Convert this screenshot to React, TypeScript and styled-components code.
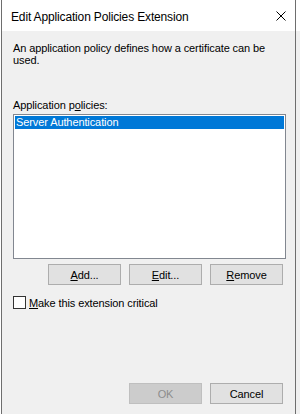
import React from "react";
import styled, { createGlobalStyle } from "styled-components";

const GlobalStyle = createGlobalStyle`
  html, body {
    margin: 0;
    padding: 0;
    background: #f0f0f0;
  }
  body {
    font-family: "Liberation Sans", Arial, sans-serif;
    font-size: 11px;
    color: #000;
  }
`;

const Page = styled.div`
  display: flex;
  width: 300px;
  height: 414px;
  overflow: hidden;
  background: linear-gradient(#ffffff 0 31px, #f0f0f0 31px);
`;

const Edge = styled.div`
  width: 1px;
  background: #ffffff;
`;

const Dialog = styled.div`
  box-sizing: border-box;
  width: 295px;
  height: 414px;
  border-left: 1px solid #6e6e6e;
  border-right: 1px solid #6e6e6e;
  display: flex;
  flex-direction: column;
  background: #f0f0f0;
`;

const TitleBar = styled.div`
  height: 31px;
  background: #ffffff;
  display: flex;
  align-items: center;
  justify-content: space-between;
  padding-left: 9px;
  padding-right: 9px;
`;

const Title = styled.span`
  font-size: 12px;
  letter-spacing: -0.15px;
  line-height: 14px;
  padding-top: 2px;
`;

const Close = styled.svg`
  width: 10px;
  height: 10px;
  margin-top: 0px;
`;

const Body = styled.div`
  flex: 1;
  display: flex;
  flex-direction: column;
  padding: 11px 9px 10px 11px;
  letter-spacing: -0.1px;
  line-height: 12px;
`;

const Description = styled.p`
  margin: 0;
  width: 270px;
`;

const Label = styled.div`
  margin-top: 33px;
`;

const ListBox = styled.div`
  box-sizing: border-box;
  margin-top: 3px;
  width: 273px;
  height: 145px;
  border: 1px solid #828790;
  background: #ffffff;
  padding: 1px;
`;

const ListItem = styled.div<{ $selected?: boolean }>`
  height: 13px;
  line-height: 13px;
  padding-left: 1px;
  color: ${(p) => (p.$selected ? "#ffffff" : "#000000")};
  background: ${(p) => (p.$selected ? "#0078d7" : "transparent")};
`;

const ButtonRow = styled.div<{ $top: number }>`
  display: flex;
  justify-content: flex-end;
  gap: 8px;
  width: 270px;
  margin-top: ${(p) => p.$top}px;
`;

const Button = styled.button`
  box-sizing: border-box;
  width: 73px;
  height: 21px;
  margin: 0;
  padding: 0;
  border: 1px solid #adadad;
  background: #e1e1e1;
  font-family: inherit;
  font-size: 11px;
  letter-spacing: -0.1px;
  color: #000;
  &:disabled {
    background: #cccccc;
    border-color: #bfbfbf;
    color: #8c8c8c;
  }
`;

const CheckRow = styled.label`
  display: flex;
  align-items: center;
  gap: 3px;
  margin-top: 11px;
`;

const Box = styled.span`
  box-sizing: border-box;
  width: 13px;
  height: 13px;
  border: 1px solid #333333;
  background: #ffffff;
`;

const Footer = styled(ButtonRow)`
  margin-top: auto;
`;

const U = styled.span`
  text-decoration: underline;
  text-underline-offset: 1px;
`;

export default function App() {
  return (
    <>
      <GlobalStyle />
      <Page>
        <Edge />
        <Dialog>
          <TitleBar>
            <Title>Edit Application Policies Extension</Title>
            <Close viewBox="0 0 10 10">
              <path d="M0.5 0.5 L9.5 9.5 M9.5 0.5 L0.5 9.5" stroke="#000" strokeWidth="1" fill="none" />
            </Close>
          </TitleBar>
          <Body>
            <Description>
              An application policy defines how a certificate can be used.
            </Description>
            <Label>
              Application p<U>o</U>licies:
            </Label>
            <ListBox>
              <ListItem $selected>Server Authentication</ListItem>
            </ListBox>
            <ButtonRow $top={5}>
              <Button>
                <U>A</U>dd...
              </Button>
              <Button>
                <U>E</U>dit...
              </Button>
              <Button>
                <U>R</U>emove
              </Button>
            </ButtonRow>
            <CheckRow>
              <Box />
              <span>
                <U>M</U>ake this extension critical
              </span>
            </CheckRow>
            <Footer $top={0}>
              <Button disabled>OK</Button>
              <Button>Cancel</Button>
            </Footer>
          </Body>
        </Dialog>
      </Page>
    </>
  );
}
